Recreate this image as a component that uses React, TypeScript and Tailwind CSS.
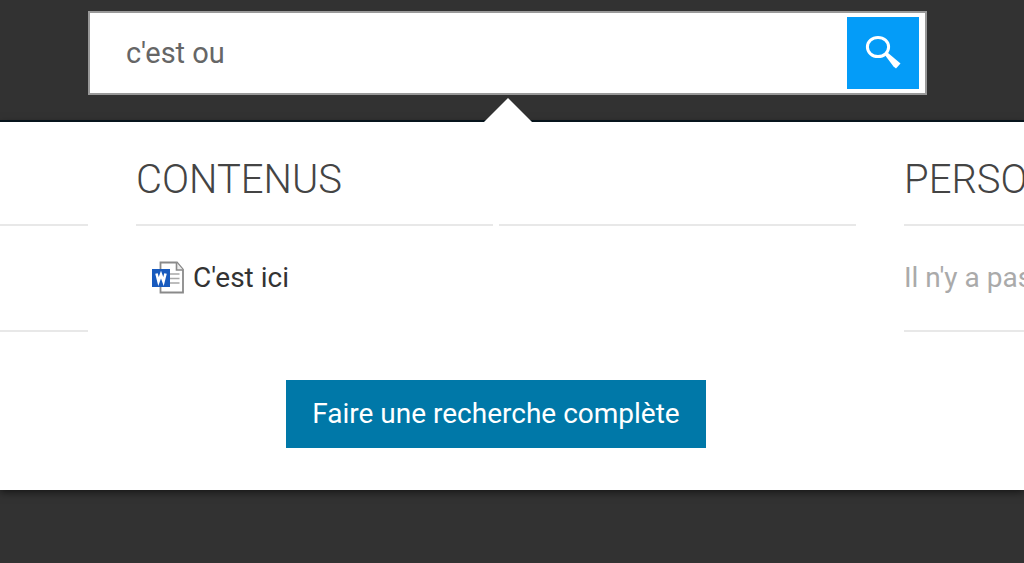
import React, { useState } from 'react';

const SearchIcon = () => (
  <svg viewBox="0 0 36 36" className="h-9 w-9" fill="none" aria-hidden="true">
    <ellipse cx="13" cy="12" rx="10.6" ry="9.6" stroke="white" strokeWidth="3"/>
    <path d="M19.5 19.5 L22.5 17.5 L35.5 28.5 L31 33.5 L28.5 31.5 Z" fill="white"/>
  </svg>
);

const WordIcon = () => (
  <svg viewBox="0 0 34 34" className="h-[34px] w-[34px] shrink-0" aria-hidden="true">
    <path d="M9.5 1.5 H26 L32 8.5 V31.5 H9.5 Z" fill="white" stroke="#8a8a8a" strokeWidth="1.8"/>
    <path d="M25.5 1.5 V9 H32" fill="#ececec" stroke="#8a8a8a" strokeWidth="1.6"/>
    <path d="M19 13 H28.5 M19 17.5 H28.5 M19 22 H28.5" stroke="#a8a8a8" strokeWidth="1.5"/>
    <rect x="1" y="8" width="18" height="18" fill="#185abd"/>
    <path d="M5.5 12.5 L7.5 20.5 L10 13.5 L12.5 20.5 L14.5 12.5" fill="none" stroke="white" strokeWidth="2.6"/>
  </svg>
);

const App = () => {
  const [ query, setQuery ] = useState( "c'est ou" );

  return (
    <div className={ "min-h-screen overflow-hidden bg-[#323232] font-['Roboto',sans-serif]" }>
      {/*----------------------Search*/ }
      <header className="relative z-10 border-b-2 border-[#07141c] pt-[11px] pb-[25px] pl-[88px] pr-[97px]">
        <form role="search"
              className="flex h-[84px] items-center border-2 border-[#999] bg-white pr-1.5 pb-px"
              onSubmit={ ( e ) => e.preventDefault() }>
          <input type="text"
                 aria-label="Rechercher"
                 className="min-w-0 flex-1 bg-transparent pt-0.5 pl-9 text-[29px] text-[#666] outline-none"
                 value={ query }
                 onChange={ ( e ) => setQuery( e.target.value ) }/>
          <button type="submit" aria-label="Lancer la recherche"
                  className="flex h-[72px] w-[72px] items-center justify-center bg-[#049cf8]">
            <SearchIcon/>
          </button>
        </form>
        <svg viewBox="0 0 48 24" className="absolute -bottom-0.5 left-[484px] h-6 w-12" aria-hidden="true">
          <path d="M0 24 L24 0 L48 24 Z" fill="white"/>
        </svg>
      </header>

      {/*----------------------Results*/ }
      <main className="bg-white pb-[42px] shadow-[0_2px_8px_rgba(0,0,0,0.6)]">
        <div className="grid grid-cols-[88px_minmax(0,1fr)_120px] gap-12">
          <section className="pt-[102px]">
            <div className="h-[108px] border-y-2 border-[#e8e8e8]"/>
          </section>

          <section>
            <h2 className="h-[102px] pt-[34px] text-[40px] leading-[48px] font-light text-[#444]">CONTENUS</h2>
            <div className="flex gap-1.5">
              <div className="h-0.5 flex-1 bg-[#e8e8e8]"/>
              <div className="h-0.5 flex-1 bg-[#e8e8e8]"/>
            </div>
            <ul className="pt-8 pl-[15px]">
              <li>
                <a href="#" className="flex w-fit items-center gap-2 text-[28px] leading-10 text-[#333]">
                  <WordIcon/>
                  C'est ici
                </a>
              </li>
            </ul>
          </section>

          <section className="whitespace-nowrap">
            <h2 className="h-[102px] pt-[34px] text-[40px] leading-[48px] font-light text-[#444]">PERSO</h2>
            <div className="h-[108px] border-y-2 border-[#e8e8e8] pt-8">
              <p className="text-[28px] leading-10 text-[#aaa]">Il n'y a pas</p>
            </div>
          </section>
        </div>

        <div className="flex justify-center pt-12 pr-8">
          <button type="button" className="h-[68px] w-[420px] bg-[#0078a8] text-[28px] text-white">
            Faire une recherche complète
          </button>
        </div>
      </main>
    </div>
  );
};

export default App;
